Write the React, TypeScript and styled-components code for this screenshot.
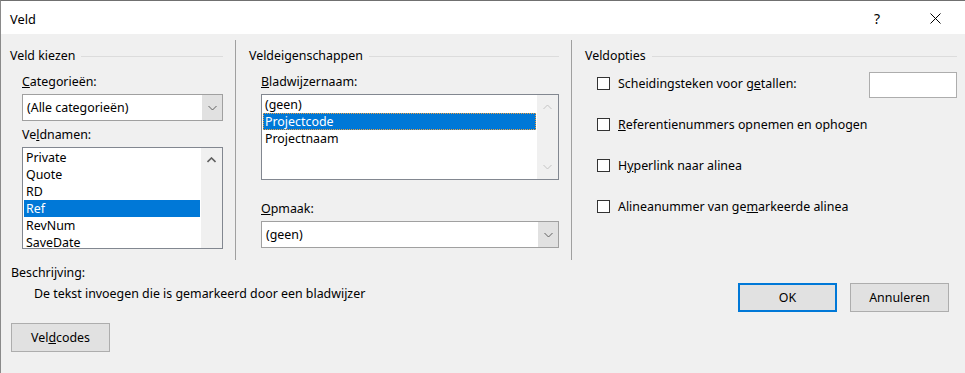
import styled, { createGlobalStyle } from 'styled-components';

const GlobalStyle = createGlobalStyle`
  html, body {
    margin: 0;
    padding: 0;
    background: #f0f0f0;
  }
  body {
    font-family: "Noto Sans", "Liberation Sans", sans-serif;
    font-size: 12.4px;
    color: #000;
  }
`;

const Window = styled.div`
  width: 965px;
  height: 373px;
  box-sizing: border-box;
  border-left: 1px solid #8a8a8a;
  border-top: 1px solid #707070;
  background: #f0f0f0;
  overflow: hidden;
  display: flex;
  flex-direction: column;
`;

const TitleBar = styled.div`
  height: 33px;
  flex: none;
  background: #fff;
  display: flex;
  align-items: center;
  padding: 0 7px 0 9px;
`;

const Title = styled.div`
  flex: 1;
  font-size: 12.8px;
  line-height: 16px;
  margin-top: 3px;
`;

const TitleButton = styled.div`
  width: 46px;
  height: 33px;
  display: flex;
  align-items: center;
  justify-content: center;
  font-size: 14px;
  margin-top: 2px;
  & + & {
    margin-left: 12px;
  }
`;

const Columns = styled.div`
  display: flex;
  height: 220px;
  margin-top: 6px;
  flex: none;
`;

const Column = styled.section<{ $width?: number; $pl: number; $pr: number; $divider?: boolean }>`
  box-sizing: border-box;
  ${(p) => (p.$width ? `width: ${p.$width}px; flex: none;` : 'flex: 1;')}
  padding: 8px ${(p) => p.$pr}px 0 ${(p) => p.$pl}px;
  border-right: ${(p) => (p.$divider ? '1px solid #a0a0a0' : 'none')};
  display: flex;
  flex-direction: column;
`;

const GroupHeader = styled.div`
  display: flex;
  align-items: center;
  gap: 6px;
  height: 16px;
  line-height: 16px;
  &::after {
    content: '';
    flex: 1;
    height: 1px;
    background: #dcdcdc;
  }
`;

const Indent = styled.div`
  padding-left: 12px;
  display: flex;
  flex-direction: column;
`;

const Label = styled.div<{ $mt: number }>`
  margin-top: ${(p) => p.$mt}px;
  line-height: 16px;
  height: 16px;
  white-space: nowrap;
`;

const Combo = styled.div<{ $mt?: number }>`
  margin-top: ${(p) => p.$mt ?? 4}px;
  height: 27px;
  box-sizing: border-box;
  border: 1px solid #a0a0a0;
  background: #fff;
  display: flex;
`;

const ComboText = styled.div`
  flex: 1;
  padding-left: 4px;
  line-height: 25px;
  white-space: nowrap;
`;

const ComboButton = styled.div`
  width: 20px;
  background: #e1e1e1;
  display: flex;
  align-items: center;
  justify-content: center;
`;

const ListBox = styled.div<{ $h: number }>`
  margin-top: 4px;
  height: ${(p) => p.$h}px;
  box-sizing: border-box;
  border: 1px solid #828790;
  background: #fff;
  display: flex;
  overflow: hidden;
`;

const Items = styled.div`
  flex: 1;
  padding: 1px;
  overflow: hidden;
`;

const Item = styled.div<{ $selected?: boolean; $focus?: boolean }>`
  height: 17px;
  line-height: 17px;
  padding-left: 2px;
  white-space: nowrap;
  background: ${(p) => (p.$selected ? '#0078d7' : 'transparent')};
  color: ${(p) => (p.$selected ? '#fff' : '#000')};
  outline: ${(p) => (p.$focus ? '1px dotted #f0a040' : 'none')};
  outline-offset: -1px;
`;

const ScrollBar = styled.div`
  width: 21px;
  background: #f0f0f0;
  display: flex;
  flex-direction: column;
  justify-content: space-between;
`;

const ArrowCell = styled.div`
  height: 24px;
  display: flex;
  align-items: center;
  justify-content: center;
`;

const OptionRow = styled.div`
  height: 41px;
  display: flex;
  align-items: center;
  padding-left: 12px;
`;

const OptionRows = styled.div`
  margin-top: -1px;
  display: flex;
  flex-direction: column;
`;

const CheckBox = styled.span`
  width: 13px;
  height: 13px;
  box-sizing: border-box;
  border: 1px solid #333;
  background: #fff;
  flex: none;
  margin-right: 8px;
`;

const OptionLabel = styled.span`
  line-height: 16px;
  white-space: nowrap;
`;

const TextBox = styled.div`
  margin-left: auto;
  margin-top: 3px;
  width: 88px;
  height: 26px;
  box-sizing: border-box;
  border: 1px solid #adadad;
  background: #fff;
`;

const Footer = styled.div`
  display: flex;
  justify-content: space-between;
  padding: 0 16px 0 10px;
`;

const Description = styled.div`
  display: flex;
  flex-direction: column;
`;

const DescText = styled.div`
  margin-top: 5px;
  padding-left: 23px;
  line-height: 16px;
  white-space: nowrap;
`;

const ButtonRow = styled.div`
  margin-top: 23px;
  display: flex;
  gap: 13px;
  align-self: flex-start;
`;

const Button = styled.button<{ $default?: boolean; $mt?: number }>`
  width: 99px;
  height: 29px;
  box-sizing: border-box;
  margin: ${(p) => p.$mt ?? 0}px 0 0 0;
  padding: 0;
  background: #e1e1e1;
  border: ${(p) => (p.$default ? '2px solid #0078d7' : '1px solid #adadad')};
  font: inherit;
  color: #000;
  line-height: 16px;
`;

function Chevron({ up, color }: { up?: boolean; color: string }) {
  return (
    <svg width="9" height="6" viewBox="0 0 9 6">
      <polyline
        points={up ? '0.5,5 4.5,1 8.5,5' : '0.5,1 4.5,5 8.5,1'}
        fill="none"
        stroke={color}
        strokeWidth={up && color !== '#c4c4c4' ? 1.6 : 1}
      />
    </svg>
  );
}

function CloseIcon() {
  return (
    <svg width="11" height="11" viewBox="0 0 11 11">
      <path d="M0.5 0.5 L10.5 10.5 M10.5 0.5 L0.5 10.5" stroke="#000" strokeWidth="1" />
    </svg>
  );
}

export default function App() {
  return (
    <>
      <GlobalStyle />
      <Window>
        <TitleBar>
          <Title>Veld</Title>
          <TitleButton>?</TitleButton>
          <TitleButton>
            <CloseIcon />
          </TitleButton>
        </TitleBar>

        <Columns>
          <Column $width={235} $pl={9} $pr={12} $divider>
            <GroupHeader>Veld kiezen</GroupHeader>
            <Indent>
              <Label $mt={10}>
                <u>C</u>ategorieën:
              </Label>
              <Combo>
                <ComboText>(Alle categorieën)</ComboText>
                <ComboButton>
                  <Chevron color="#606060" />
                </ComboButton>
              </Combo>
              <Label $mt={6}>
                Ve<u>l</u>dnamen:
              </Label>
              <ListBox $h={102}>
                <Items>
                  <Item>Private</Item>
                  <Item>Quote</Item>
                  <Item>RD</Item>
                  <Item $selected>Ref</Item>
                  <Item>RevNum</Item>
                  <Item>SaveDate</Item>
                </Items>
                <ScrollBar>
                  <ArrowCell>
                    <Chevron up color="#606060" />
                  </ArrowCell>
                </ScrollBar>
              </ListBox>
            </Indent>
          </Column>

          <Column $width={336} $pl={13} $pr={12} $divider>
            <GroupHeader>Veldeigenschappen</GroupHeader>
            <Indent>
              <Label $mt={10}>
                <u>B</u>ladwijzernaam:
              </Label>
              <ListBox $h={86}>
                <Items>
                  <Item>(geen)</Item>
                  <Item $selected $focus>
                    Projectcode
                  </Item>
                  <Item>Projectnaam</Item>
                </Items>
                <ScrollBar>
                  <ArrowCell>
                    <Chevron up color="#c4c4c4" />
                  </ArrowCell>
                  <ArrowCell>
                    <Chevron color="#c4c4c4" />
                  </ArrowCell>
                </ScrollBar>
              </ListBox>
              <Label $mt={21}>
                <u>O</u>pmaak:
              </Label>
              <Combo>
                <ComboText>(geen)</ComboText>
                <ComboButton>
                  <Chevron color="#606060" />
                </ComboButton>
              </Combo>
            </Indent>
          </Column>

          <Column $pl={13} $pr={8}>
            <GroupHeader>Veldopties</GroupHeader>
            <OptionRows>
              <OptionRow>
                <CheckBox />
                <OptionLabel>
                  Scheidingsteken voor g<u>e</u>tallen:
                </OptionLabel>
                <TextBox />
              </OptionRow>
              <OptionRow>
                <CheckBox />
                <OptionLabel>
                  <u>R</u>eferentienummers opnemen en ophogen
                </OptionLabel>
              </OptionRow>
              <OptionRow>
                <CheckBox />
                <OptionLabel>
                  H<u>y</u>perlink naar alinea
                </OptionLabel>
              </OptionRow>
              <OptionRow>
                <CheckBox />
                <OptionLabel>
                  Alineanummer van ge<u>m</u>arkeerde alinea
                </OptionLabel>
              </OptionRow>
            </OptionRows>
          </Column>
        </Columns>

        <Footer>
          <Description>
            <Label $mt={5}>Beschrijving:</Label>
            <DescText>De tekst invoegen die is gemarkeerd door een bladwijzer</DescText>
            <Button $mt={21}>
              Vel<u>d</u>codes
            </Button>
          </Description>
          <ButtonRow>
            <Button $default>OK</Button>
            <Button>Annuleren</Button>
          </ButtonRow>
        </Footer>
      </Window>
    </>
  );
}
